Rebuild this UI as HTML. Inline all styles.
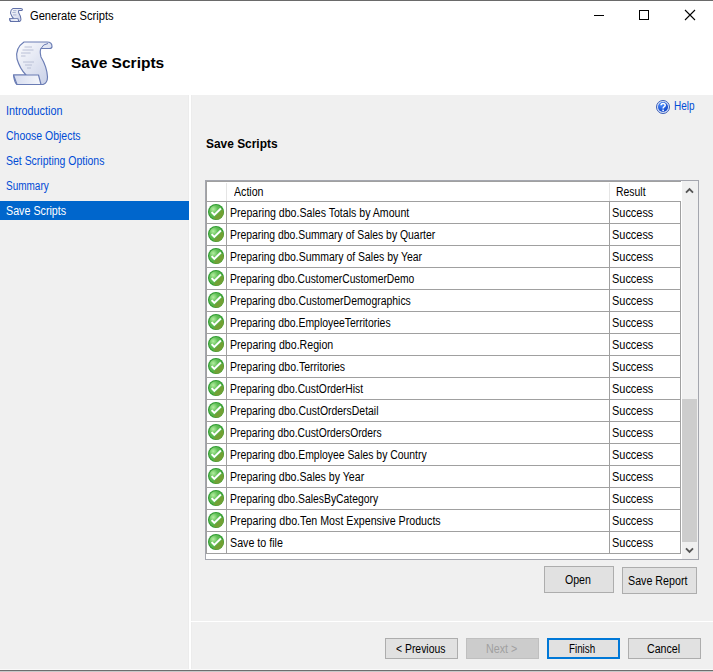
<!DOCTYPE html>
<html><head><meta charset="utf-8">
<style>
html,body{margin:0;padding:0;}
body{width:713px;height:672px;position:relative;overflow:hidden;background:#fff;font-family:"Liberation Sans",sans-serif;color:#000;}
.a{position:absolute;}
.t{position:absolute;white-space:pre;line-height:1;font-size:12px;transform-origin:0 0;}
.hl{position:absolute;left:206px;width:474px;height:1px;background:#a0a0a0;}
.ck{position:absolute;left:208px;width:16px;height:16px;}
</style></head><body>
<svg width="0" height="0" style="position:absolute">
<defs>
<radialGradient id="gfill" cx="0.3" cy="0.3" r="0.8">
<stop offset="0" stop-color="#b4eea0"/><stop offset="0.4" stop-color="#62c058"/><stop offset="1" stop-color="#4aa83a"/>
</radialGradient>
<linearGradient id="gdark" x1="0" y1="1" x2="1" y2="0">
<stop offset="0" stop-color="#78a838"/><stop offset="1" stop-color="#5a9a30"/>
</linearGradient>
<symbol id="chk" viewBox="0 0 16 16">
<circle cx="8" cy="8" r="8" fill="#2f9a30"/>
<circle cx="8" cy="8" r="6.9" fill="url(#gfill)"/>
<path d="M5.2 14.6L14.6 5.2A6.9 6.9 0 0 1 5.2 14.6Z" fill="#72a035"/>
<path d="M3.6 8.1L6.3 10.9L12.9 4.5" fill="none" stroke="#fff" stroke-width="2"/>
</symbol>
</defs>
</svg>
<!-- window top border -->
<div class="a" style="left:0;top:0;width:713px;height:1px;background:#6a6a6a"></div>

<!-- gray areas -->
<div class="a" style="left:0;top:95px;width:189px;height:574px;background:#f0f0f0"></div>
<div class="a" style="left:188px;top:95px;width:1px;height:574px;background:#ececec"></div>
<div class="a" style="left:191px;top:95px;width:522px;height:574px;background:#f0f0f0"></div>
<div class="a" style="left:191px;top:95px;width:1px;height:574px;background:#ececec"></div>
<div class="a" style="left:191px;top:621px;width:522px;height:1px;background:#fff"></div>
<div class="a" style="left:0;top:669px;width:713px;height:1px;background:#fafafa"></div>
<div class="a" style="left:0;top:670px;width:713px;height:1px;background:#6e6e6e"></div>
<div class="a" style="left:0;top:671px;width:713px;height:1px;background:#c8c8c8"></div>

<!-- title icon -->
<svg class="a" style="left:9px;top:8px" width="14" height="14" viewBox="2 1.5 41.5 45.5" preserveAspectRatio="none">
<path d="M14 3H37Q42 3 42 7.5Q42 9.5 39.5 9.5H31Q29.5 12 31 18Q37 28 37.5 38Q37.5 44 33 45.5H7Q4.5 44 3.5 36H16Q10 30 7 20Q5 9 14 3Z" fill="url(#sg)" stroke="#6070a8" stroke-width="3" stroke-linejoin="round"/>
<path d="M3.5 36H28.5L31 45.5H7Z" fill="url(#sg2)" stroke="#6070a8" stroke-width="3" stroke-linejoin="round"/>
<path d="M14 10H24M12 16H22M14 24H24" stroke="#9aa6c8" stroke-width="2.5"/>
</svg>

<!-- window buttons -->
<div class="a" style="left:594px;top:15px;width:10px;height:1px;background:#000"></div>
<div class="a" style="left:639px;top:10px;width:8px;height:8px;border:1px solid #000"></div>
<svg class="a" style="left:684px;top:9px" width="12" height="12" viewBox="0 0 12 12"><path d="M1 1L11 11M11 1L1 11" stroke="#000" stroke-width="1.1"/></svg>

<!-- big scroll icon -->
<svg class="a" style="left:10px;top:39px" width="46" height="50" viewBox="0 0 46 50">
<defs>
<linearGradient id="sg" x1="0" y1="0" x2="1" y2="1"><stop offset="0" stop-color="#ffffff"/><stop offset="1" stop-color="#c5cde6"/></linearGradient>
<linearGradient id="sg2" x1="0" y1="0" x2="1" y2="0"><stop offset="0" stop-color="#d6dcef"/><stop offset="1" stop-color="#f4f6fb"/></linearGradient>
</defs>
<path d="M14 3H37Q42 3 42 7.5Q42 9.5 39.5 9.5H31Q29.5 12 31 18Q37 28 37.5 38Q37.5 44 33 45.5H7Q4.5 44 3.5 36H16Q10 30 7 20Q5 9 14 3Z" fill="url(#sg)" stroke="#6a7cb4" stroke-width="1.15" stroke-linejoin="round"/>
<path d="M3.5 36H28.5L31 45.5H7Z" fill="url(#sg2)" stroke="#6a7cb4" stroke-width="1.15" stroke-linejoin="round"/>
<path d="M31 9.5Q33 5 38 4.5" fill="none" stroke="#6a7cb4" stroke-width="1"/>
<path d="M14.5 8H22M12.5 11H23.5M11 14H20.5M11 17H15.5M13 23H24M15 26H22M17 29H21" stroke="#b4bbd2" stroke-width="0.9"/>
</svg>

<!-- help icon -->
<svg class="a" style="left:656px;top:100px" width="14" height="14" viewBox="0 0 14 14">
<defs><radialGradient id="hg" cx="0.35" cy="0.3" r="0.8"><stop offset="0" stop-color="#4a8cff"/><stop offset="1" stop-color="#0a3cc0"/></radialGradient></defs>
<circle cx="7" cy="7" r="6.5" fill="#dce6f8" stroke="#3a5cb8" stroke-width="1"/>
<circle cx="7" cy="7" r="5" fill="url(#hg)"/>
<path d="M5 5.3Q5 3.4 7.1 3.4Q9.2 3.4 9.2 5.2Q9.2 6.3 8 6.9Q7.1 7.4 7.1 8.6" fill="none" stroke="#fff" stroke-width="1.5"/>
<rect x="6.3" y="9.6" width="1.6" height="1.6" fill="#fff"/>
</svg>

<!-- nav selected -->
<div class="a" style="left:0;top:201px;width:189px;height:19px;background:#0066cc"></div>

<!-- table box -->
<div class="a" style="left:205px;top:180px;width:492px;height:378px;border:1px solid #a4a6ae;background:#fff"></div>
<!-- grid top/left -->
<div class="a" style="left:206px;top:181px;width:475px;height:1px;background:#a0a0a0"></div>
<div class="a" style="left:206px;top:181px;width:1px;height:373px;background:#a0a0a0"></div>
<!-- header separators -->
<div class="a" style="left:226px;top:183px;width:1px;height:18px;background:#e5e5e5"></div>
<div class="a" style="left:609px;top:183px;width:1px;height:18px;background:#e5e5e5"></div>
<!-- row lines -->
<div class="hl" style="top:201px"></div>
<div class="hl" style="top:223px"></div>
<div class="hl" style="top:245px"></div>
<div class="hl" style="top:267px"></div>
<div class="hl" style="top:289px"></div>
<div class="hl" style="top:311px"></div>
<div class="hl" style="top:333px"></div>
<div class="hl" style="top:355px"></div>
<div class="hl" style="top:377px"></div>
<div class="hl" style="top:399px"></div>
<div class="hl" style="top:421px"></div>
<div class="hl" style="top:443px"></div>
<div class="hl" style="top:465px"></div>
<div class="hl" style="top:487px"></div>
<div class="hl" style="top:509px"></div>
<div class="hl" style="top:531px"></div>
<div class="hl" style="top:553px"></div>
<!-- vertical grid lines -->
<div class="a" style="left:226px;top:201px;width:1px;height:353px;background:#a0a0a0"></div>
<div class="a" style="left:609px;top:201px;width:1px;height:353px;background:#a0a0a0"></div>
<div class="a" style="left:680px;top:201px;width:1px;height:353px;background:#a0a0a0"></div>
<!-- check icons -->
<svg class="ck" style="top:204px" viewBox="0 0 16 16"><use href="#chk"/></svg>
<svg class="ck" style="top:226px" viewBox="0 0 16 16"><use href="#chk"/></svg>
<svg class="ck" style="top:248px" viewBox="0 0 16 16"><use href="#chk"/></svg>
<svg class="ck" style="top:270px" viewBox="0 0 16 16"><use href="#chk"/></svg>
<svg class="ck" style="top:292px" viewBox="0 0 16 16"><use href="#chk"/></svg>
<svg class="ck" style="top:314px" viewBox="0 0 16 16"><use href="#chk"/></svg>
<svg class="ck" style="top:336px" viewBox="0 0 16 16"><use href="#chk"/></svg>
<svg class="ck" style="top:358px" viewBox="0 0 16 16"><use href="#chk"/></svg>
<svg class="ck" style="top:380px" viewBox="0 0 16 16"><use href="#chk"/></svg>
<svg class="ck" style="top:402px" viewBox="0 0 16 16"><use href="#chk"/></svg>
<svg class="ck" style="top:424px" viewBox="0 0 16 16"><use href="#chk"/></svg>
<svg class="ck" style="top:446px" viewBox="0 0 16 16"><use href="#chk"/></svg>
<svg class="ck" style="top:468px" viewBox="0 0 16 16"><use href="#chk"/></svg>
<svg class="ck" style="top:490px" viewBox="0 0 16 16"><use href="#chk"/></svg>
<svg class="ck" style="top:512px" viewBox="0 0 16 16"><use href="#chk"/></svg>
<svg class="ck" style="top:534px" viewBox="0 0 16 16"><use href="#chk"/></svg>
<!-- scrollbar -->
<div class="a" style="left:682px;top:181px;width:16px;height:378px;background:#f0f0f0"></div>
<div class="a" style="left:682px;top:399px;width:15px;height:143px;background:#cdcdcd"></div>
<svg class="a" style="left:684px;top:185px" width="11" height="10" viewBox="0 0 11 10"><path d="M2 7.6L5.5 4.1L9 7.6" fill="none" stroke="#555" stroke-width="1.9"/></svg>
<svg class="a" style="left:684px;top:545px" width="11" height="10" viewBox="0 0 11 10"><path d="M2 3.4L5.5 6.9L9 3.4" fill="none" stroke="#555" stroke-width="1.9"/></svg>

<!-- buttons -->
<div class="a" style="left:544px;top:566px;width:68px;height:25px;border:1px solid #adadad;background:#e1e1e1"></div>
<div class="a" style="left:622px;top:567px;width:73px;height:25px;border:1px solid #adadad;background:#e1e1e1"></div>
<div class="a" style="left:385px;top:638px;width:71px;height:19px;border:1px solid #adadad;background:#e1e1e1"></div>
<div class="a" style="left:466px;top:638px;width:71px;height:19px;border:1px solid #bfbfbf;background:#cccccc"></div>
<div class="a" style="left:547px;top:638px;width:69px;height:17px;border:2px solid #0078d7;background:#e1e1e1"></div>
<div class="a" style="left:628px;top:638px;width:71px;height:19px;border:1px solid #adadad;background:#e1e1e1"></div>

<div class="t" style="left:30.00px;top:10px;font-size:12px;color:#000;transform:scaleX(0.9292)">Generate Scripts</div>
<div class="t" style="left:70.50px;top:55px;font-size:15.5px;font-weight:bold;color:#000;transform:scaleX(1.0022)">Save Scripts</div>
<div class="t" style="left:5.80px;top:105px;font-size:12px;color:#004cd6;transform:scaleX(0.9000)">Introduction</div>
<div class="t" style="left:6.00px;top:130px;font-size:12px;color:#004cd6;transform:scaleX(0.8738)">Choose Objects</div>
<div class="t" style="left:5.63px;top:155px;font-size:12px;color:#004cd6;transform:scaleX(0.8730)">Set Scripting Options</div>
<div class="t" style="left:5.67px;top:180px;font-size:12px;color:#004cd6;transform:scaleX(0.8327)">Summary</div>
<div class="t" style="left:5.61px;top:205px;font-size:12px;color:#fff;transform:scaleX(0.8923)">Save Scripts</div>
<div class="t" style="left:673.97px;top:100px;font-size:12px;color:#004cd6;transform:scaleX(0.8326)">Help</div>
<div class="t" style="left:205.70px;top:138px;font-size:12px;font-weight:bold;color:#000;transform:scaleX(0.9930)">Save Scripts</div>
<div class="t" style="left:234.00px;top:186px;font-size:12px;color:#000;transform:scaleX(0.8844)">Action</div>
<div class="t" style="left:616.43px;top:186px;font-size:12px;color:#000;transform:scaleX(0.8688)">Result</div>
<div class="t" style="left:564.80px;top:574px;font-size:12px;color:#000;transform:scaleX(0.8821)">Open</div>
<div class="t" style="left:628.31px;top:575px;font-size:12px;color:#000;transform:scaleX(0.8908)">Save Report</div>
<div class="t" style="left:396.10px;top:643px;font-size:12px;color:#000;transform:scaleX(0.8661)">&lt; Previous</div>
<div class="t" style="left:485.61px;top:643px;font-size:12px;color:#a0a0a0;transform:scaleX(0.8939)">Next &gt;</div>
<div class="t" style="left:569.18px;top:643px;font-size:12px;color:#000;transform:scaleX(0.8167)">Finish</div>
<div class="t" style="left:646.50px;top:643px;font-size:12px;color:#000;transform:scaleX(0.8861)">Cancel</div>
<div class="t" style="left:229.62px;top:207px;font-size:12px;color:#000;transform:scaleX(0.8822)">Preparing dbo.Sales Totals by Amount</div>
<div class="t" style="left:612.39px;top:207px;font-size:12px;color:#000;transform:scaleX(0.9116)">Success</div>
<div class="t" style="left:229.63px;top:229px;font-size:12px;color:#000;transform:scaleX(0.8668)">Preparing dbo.Summary of Sales by Quarter</div>
<div class="t" style="left:612.39px;top:229px;font-size:12px;color:#000;transform:scaleX(0.9116)">Success</div>
<div class="t" style="left:229.63px;top:251px;font-size:12px;color:#000;transform:scaleX(0.8725)">Preparing dbo.Summary of Sales by Year</div>
<div class="t" style="left:612.39px;top:251px;font-size:12px;color:#000;transform:scaleX(0.9116)">Success</div>
<div class="t" style="left:229.64px;top:273px;font-size:12px;color:#000;transform:scaleX(0.8582)">Preparing dbo.CustomerCustomerDemo</div>
<div class="t" style="left:612.39px;top:273px;font-size:12px;color:#000;transform:scaleX(0.9116)">Success</div>
<div class="t" style="left:229.63px;top:295px;font-size:12px;color:#000;transform:scaleX(0.8689)">Preparing dbo.CustomerDemographics</div>
<div class="t" style="left:612.39px;top:295px;font-size:12px;color:#000;transform:scaleX(0.9116)">Success</div>
<div class="t" style="left:229.63px;top:317px;font-size:12px;color:#000;transform:scaleX(0.8694)">Preparing dbo.EmployeeTerritories</div>
<div class="t" style="left:612.39px;top:317px;font-size:12px;color:#000;transform:scaleX(0.9116)">Success</div>
<div class="t" style="left:229.62px;top:339px;font-size:12px;color:#000;transform:scaleX(0.8842)">Preparing dbo.Region</div>
<div class="t" style="left:612.39px;top:339px;font-size:12px;color:#000;transform:scaleX(0.9116)">Success</div>
<div class="t" style="left:229.62px;top:361px;font-size:12px;color:#000;transform:scaleX(0.8760)">Preparing dbo.Territories</div>
<div class="t" style="left:612.39px;top:361px;font-size:12px;color:#000;transform:scaleX(0.9116)">Success</div>
<div class="t" style="left:229.64px;top:383px;font-size:12px;color:#000;transform:scaleX(0.8595)">Preparing dbo.CustOrderHist</div>
<div class="t" style="left:612.39px;top:383px;font-size:12px;color:#000;transform:scaleX(0.9116)">Success</div>
<div class="t" style="left:229.63px;top:405px;font-size:12px;color:#000;transform:scaleX(0.8696)">Preparing dbo.CustOrdersDetail</div>
<div class="t" style="left:612.39px;top:405px;font-size:12px;color:#000;transform:scaleX(0.9116)">Success</div>
<div class="t" style="left:229.64px;top:427px;font-size:12px;color:#000;transform:scaleX(0.8577)">Preparing dbo.CustOrdersOrders</div>
<div class="t" style="left:612.39px;top:427px;font-size:12px;color:#000;transform:scaleX(0.9116)">Success</div>
<div class="t" style="left:229.63px;top:449px;font-size:12px;color:#000;transform:scaleX(0.8671)">Preparing dbo.Employee Sales by Country</div>
<div class="t" style="left:612.39px;top:449px;font-size:12px;color:#000;transform:scaleX(0.9116)">Success</div>
<div class="t" style="left:229.62px;top:471px;font-size:12px;color:#000;transform:scaleX(0.8820)">Preparing dbo.Sales by Year</div>
<div class="t" style="left:612.39px;top:471px;font-size:12px;color:#000;transform:scaleX(0.9116)">Success</div>
<div class="t" style="left:229.64px;top:493px;font-size:12px;color:#000;transform:scaleX(0.8641)">Preparing dbo.SalesByCategory</div>
<div class="t" style="left:612.39px;top:493px;font-size:12px;color:#000;transform:scaleX(0.9116)">Success</div>
<div class="t" style="left:229.61px;top:515px;font-size:12px;color:#000;transform:scaleX(0.8898)">Preparing dbo.Ten Most Expensive Products</div>
<div class="t" style="left:612.39px;top:515px;font-size:12px;color:#000;transform:scaleX(0.9116)">Success</div>
<div class="t" style="left:229.61px;top:537px;font-size:12px;color:#000;transform:scaleX(0.8912)">Save to file</div>
<div class="t" style="left:612.39px;top:537px;font-size:12px;color:#000;transform:scaleX(0.9116)">Success</div>
</body></html>
